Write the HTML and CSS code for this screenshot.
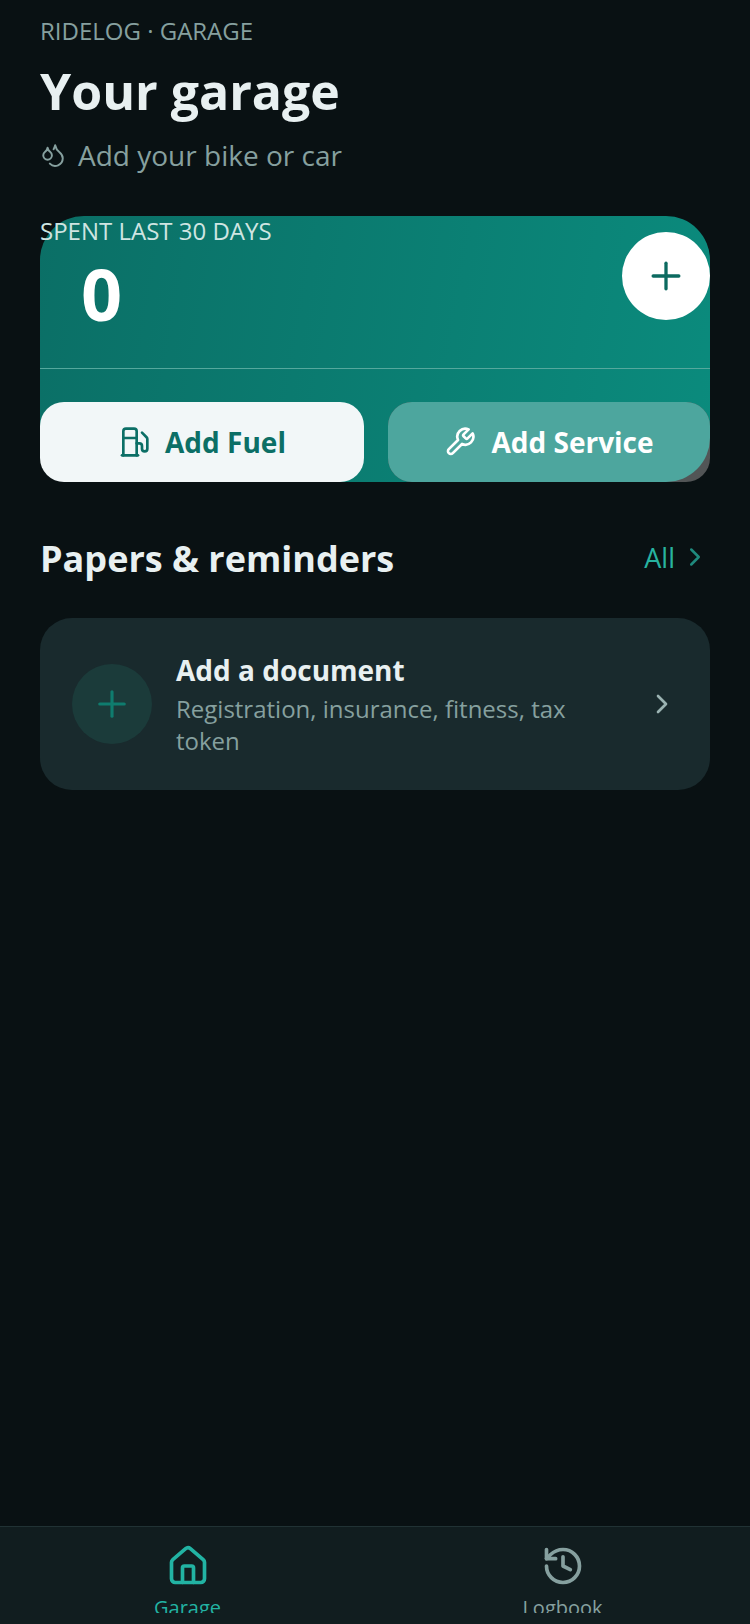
FILE: index.html
```html
<!DOCTYPE html>
<html lang="en">
<head>
    <meta charset="UTF-8">
    <meta name="viewport" content="width=device-width, initial-scale=1.0">
    <title>Your garage</title>
    <link rel="stylesheet" href="styles.css">
</head>
<body>
    <main class="content">
        <p class="eyebrow">RIDELOG · GARAGE</p>
        <h1 class="title">Your garage</h1>
        <p class="subtitle">
            <svg class="subtitle-icon" viewBox="0 0 24 24" fill="none" stroke="currentColor" stroke-width="1.8" stroke-linecap="round" stroke-linejoin="round">
                <path d="M7 16.3c2.2 0 4-1.83 4-4.05 0-1.16-.57-2.26-1.71-3.19S7.29 6.75 7 5.3c-.29 1.45-1.14 2.84-2.29 3.76S3 11.1 3 12.25c0 2.22 1.8 4.05 4 4.05z"/>
                <path d="M12.56 6.6A10.97 10.97 0 0 0 14 3.02c.5 2.5 2 4.9 4 6.5s3 3.5 3 5.5a6.98 6.98 0 0 1-11.91 4.97"/>
            </svg>
            Add your bike or car
        </p>

        <section class="spend-card">
            <div class="spend-top">
                <div>
                    <p class="spend-label">SPENT LAST 30 DAYS</p>
                    <p class="spend-value">0</p>
                </div>
                <button class="round-add">
                    <svg viewBox="0 0 24 24" fill="none" stroke="currentColor" stroke-width="1.8" stroke-linecap="round"><path d="M5 12h14"/><path d="M12 5v14"/></svg>
                </button>
            </div>
            <div class="spend-actions">
                <button class="action action-light">
                    <svg viewBox="0 0 24 24" fill="none" stroke="currentColor" stroke-width="2" stroke-linecap="round" stroke-linejoin="round">
                        <path d="M3 22h12"/><path d="M4 9h10"/>
                        <path d="M14 22V4a2 2 0 0 0-2-2H6a2 2 0 0 0-2 2v18"/>
                        <path d="M14 13h2a2 2 0 0 1 2 2v2a2 2 0 0 0 2 2a2 2 0 0 0 2-2V9.83a2 2 0 0 0-.59-1.42L18 5"/>
                    </svg>
                    Add Fuel
                </button>
                <button class="action action-glass">
                    <svg viewBox="0 0 24 24" fill="none" stroke="currentColor" stroke-width="2" stroke-linecap="round" stroke-linejoin="round">
                        <path d="M14.7 6.3a1 1 0 0 0 0 1.4l1.6 1.6a1 1 0 0 0 1.4 0l3.77-3.77a6 6 0 0 1-7.94 7.94l-6.91 6.91a2.12 2.12 0 0 1-3-3l6.91-6.91a6 6 0 0 1 7.94-7.94l-3.76 3.76z"/>
                    </svg>
                    <span>Add Service</span>
                </button>
            </div>
        </section>

        <div class="section-head">
            <h2 class="section-title">Papers &amp; reminders</h2>
            <a class="section-link">All
                <svg viewBox="0 0 24 24" fill="none" stroke="currentColor" stroke-width="2" stroke-linecap="round" stroke-linejoin="round"><path d="m9 18 6-6-6-6"/></svg>
            </a>
        </div>

        <div class="doc-card">
            <span class="doc-icon">
                <svg viewBox="0 0 24 24" fill="none" stroke="currentColor" stroke-width="1.8" stroke-linecap="round"><path d="M5 12h14"/><path d="M12 5v14"/></svg>
            </span>
            <div class="doc-text">
                <div class="doc-title">Add a document</div>
                <div class="doc-sub">Registration, insurance, fitness, tax token</div>
            </div>
            <svg class="doc-chevron" viewBox="0 0 24 24" fill="none" stroke="currentColor" stroke-width="2" stroke-linecap="round" stroke-linejoin="round"><path d="m9 18 6-6-6-6"/></svg>
        </div>
    </main>

    <nav class="tabbar">
        <a class="tab tab-active">
            <svg viewBox="0 0 24 24" fill="none" stroke="currentColor" stroke-width="2" stroke-linecap="round" stroke-linejoin="round">
                <path d="M15 21v-8a1 1 0 0 0-1-1h-4a1 1 0 0 0-1 1v8"/>
                <path d="M3 10a2 2 0 0 1 .71-1.53l7-6a2 2 0 0 1 2.58 0l7 6A2 2 0 0 1 21 10v9a2 2 0 0 1-2 2H5a2 2 0 0 1-2-2z"/>
            </svg>
            <span>Garage</span>
        </a>
        <a class="tab">
            <svg viewBox="0 0 24 24" fill="none" stroke="currentColor" stroke-width="2" stroke-linecap="round" stroke-linejoin="round">
                <path d="M3 12a9 9 0 1 0 9-9 9.75 9.75 0 0 0-6.74 2.74L3 8"/>
                <path d="M3 3v5h5"/><path d="M12 7v5l4 2"/>
            </svg>
            <span>Logbook</span>
        </a>
    </nav>
</body>
</html>
```

FILE: styles.css
```css
* {
    box-sizing: border-box;
}
body {
    margin: 0;
    height: 1624px;
    overflow: hidden;
    display: flex;
    flex-direction: column;
    font-family: "Open Sans", sans-serif;
    background-color: #091113;
    color: #e8f0f1;
}
p, h1, h2 {
    margin: 0;
}
button {
    font-family: inherit;
    border: none;
    padding: 0;
}
.content {
    flex: 1;
    padding: 15px 40px 0;
}
.eyebrow {
    font-size: 24px;
    line-height: 32px;
    color: #86a09f;
}
.title {
    font-size: 50px;
    line-height: 70px;
    font-weight: 700;
    margin-top: 9px;
    color: #e8f0f1;
}
.subtitle {
    display: flex;
    align-items: center;
    gap: 12px;
    font-size: 28px;
    line-height: 38px;
    margin-top: 10px;
    color: #86a09f;
}
.subtitle-icon {
    width: 26px;
    height: 26px;
}
.spend-card {
    margin-top: 42px;
    height: 266px;
    border-radius: 44px;
    background: linear-gradient(100deg, #0b6f66, #0b8b7d);
    display: flex;
    flex-direction: column;
}
.spend-top {
    display: flex;
    justify-content: space-between;
    height: 153px;
    border-bottom: 1px solid #55a89d;
}
.spend-label {
    font-size: 24px;
    line-height: 30px;
    color: #cfe5e2;
}
.spend-value {
    font-size: 72px;
    line-height: 94px;
    font-weight: 700;
    color: #fff;
    padding-left: 41px;
}
.round-add {
    width: 88px;
    height: 88px;
    margin-top: 16px;
    border-radius: 50%;
    background: #fff;
    color: #0c6a60;
    display: flex;
    align-items: center;
    justify-content: center;
}
.round-add svg {
    width: 44px;
    height: 44px;
}
.spend-actions {
    display: grid;
    grid-template-columns: 324px 1fr;
    gap: 24px;
    margin-top: 33px;
    flex: 1;
}
.action {
    display: flex;
    align-items: center;
    justify-content: center;
    gap: 15px;
    border-radius: 24px;
    font-size: 28px;
    font-weight: 700;
}
.action svg {
    width: 32px;
    height: 32px;
}
.action-light {
    background: #f2f7f8;
    color: #0c6f66;
}
/* grey corner peeks out behind the teal face */
.action-glass {
    position: relative;
    background: #525556;
    color: #fff;
}
.action-glass::before {
    content: "";
    position: absolute;
    inset: 0;
    border-radius: 24px 24px 44px 24px;
    background: #4da69e;
}
.action-glass svg, .action-glass span {
    position: relative;
}
.section-head {
    display: flex;
    align-items: center;
    justify-content: space-between;
    margin-top: 54px;
}
.section-title {
    font-size: 36px;
    line-height: 46px;
    font-weight: 700;
}
.section-link {
    display: flex;
    align-items: center;
    gap: 5px;
    margin-bottom: 4px;
    font-size: 27px;
    color: #27b3a0;
}
.section-link svg {
    width: 30px;
    height: 30px;
    color: #1f8a7d;
}
.doc-card {
    margin-top: 36px;
    height: 172px;
    border-radius: 32px;
    background: #192a2d;
    display: flex;
    align-items: center;
    padding: 0 32px;
    gap: 24px;
}
.doc-icon {
    width: 80px;
    height: 80px;
    flex: none;
    border-radius: 50%;
    background: #1b3b3a;
    color: #0f7c6e;
    display: flex;
    align-items: center;
    justify-content: center;
}
.doc-icon svg {
    width: 42px;
    height: 42px;
}
.doc-text {
    flex: 1;
}
.doc-title {
    font-size: 28px;
    line-height: 38px;
    font-weight: 700;
    margin-bottom: 4px;
    margin-top: -1px;
}
.doc-sub {
    font-size: 24px;
    line-height: 32px;
    color: #86a09f;
}
.doc-chevron {
    width: 32px;
    height: 32px;
    flex: none;
    color: #9bb3b2;
}
.tabbar {
    height: 98px;
    flex: none;
    display: flex;
    padding-bottom: 11px;
    background: #111d1f;
    border-top: 1px solid #213234;
}
.tab {
    flex: 1;
    display: flex;
    flex-direction: column;
    align-items: center;
    overflow: hidden;
    padding-top: 17px;
    font-size: 20px;
    line-height: 28px;
    color: #86a09f;
}
.tab svg {
    width: 44px;
    height: 44px;
    flex: none;
}
.tab span {
    margin-top: 6px;
}
.tab-active {
    color: #22b3a3;
}
```
